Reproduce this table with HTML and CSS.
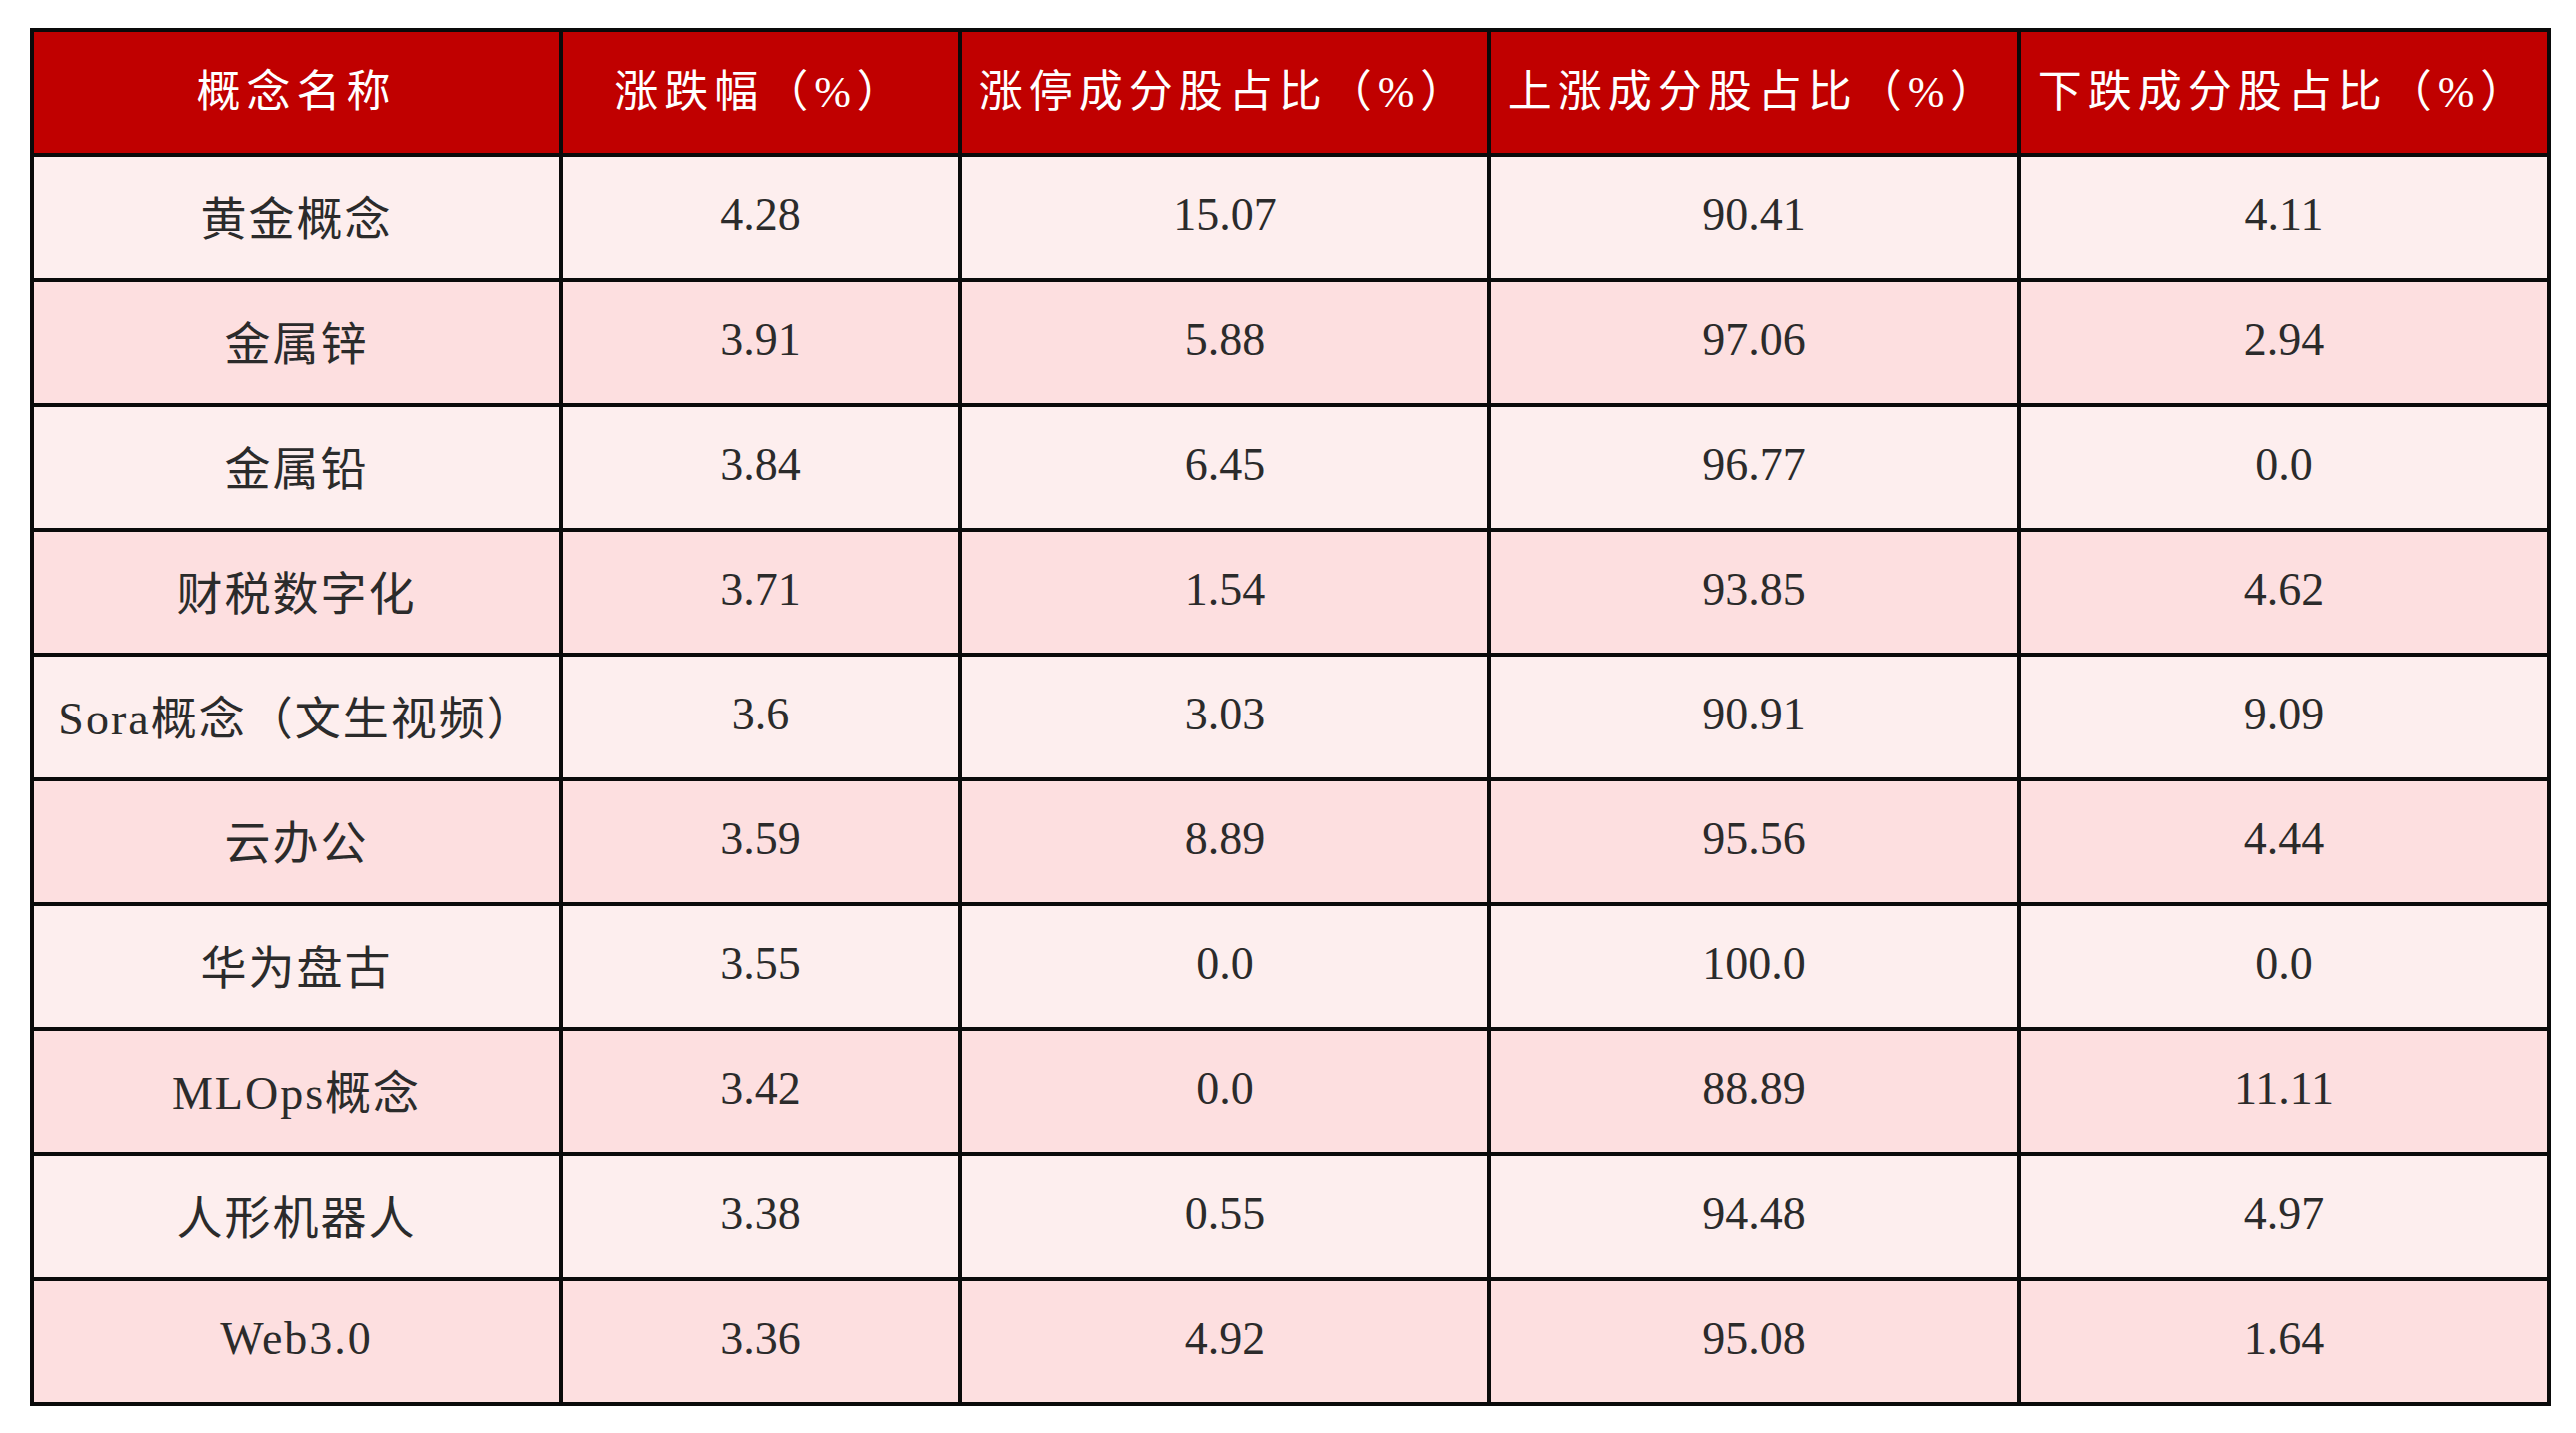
FILE: index.html
```html
<!DOCTYPE html>
<html lang="zh-CN">
<head>
<meta charset="utf-8">
<title>概念板块涨跌</title>
<link rel="stylesheet" href="styles.css">
</head>
<body>
<div class="wrap">
<table class="data">
<colgroup>
<col class="c1"><col class="c2"><col class="c3"><col class="c4"><col class="c5">
</colgroup>
<thead>
<tr><th>概念名称</th><th>涨跌幅（%）</th><th>涨停成分股占比（%）</th><th>上涨成分股占比（%）</th><th>下跌成分股占比（%）</th></tr>
</thead>
<tbody>
<tr><td class="name">黄金概念</td><td>4.28</td><td>15.07</td><td>90.41</td><td>4.11</td></tr>
<tr><td class="name">金属锌</td><td>3.91</td><td>5.88</td><td>97.06</td><td>2.94</td></tr>
<tr><td class="name">金属铅</td><td>3.84</td><td>6.45</td><td>96.77</td><td>0.0</td></tr>
<tr><td class="name">财税数字化</td><td>3.71</td><td>1.54</td><td>93.85</td><td>4.62</td></tr>
<tr><td class="name">Sora概念（文生视频）</td><td>3.6</td><td>3.03</td><td>90.91</td><td>9.09</td></tr>
<tr><td class="name">云办公</td><td>3.59</td><td>8.89</td><td>95.56</td><td>4.44</td></tr>
<tr><td class="name">华为盘古</td><td>3.55</td><td>0.0</td><td>100.0</td><td>0.0</td></tr>
<tr><td class="name">MLOps概念</td><td>3.42</td><td>0.0</td><td>88.89</td><td>11.11</td></tr>
<tr><td class="name">人形机器人</td><td>3.38</td><td>0.55</td><td>94.48</td><td>4.97</td></tr>
<tr><td class="name">Web3.0</td><td>3.36</td><td>4.92</td><td>95.08</td><td>1.64</td></tr>
</tbody>
</table>
</div>
</body>
</html>
```
FILE: styles.css
```css
html, body {
  margin: 0;
  padding: 0;
  background: #ffffff;
}
.wrap {
  padding: 28px 30px;
}
.data {
  border-collapse: collapse;
  table-layout: fixed;
  width: 2518px;
  font-family: "Liberation Serif", "Noto Sans CJK SC", serif;
}
.c1 { width: 529px; }
.c2 { width: 399px; }
.c3 { width: 530px; }
.c4 { width: 530px; }
.c5 { width: 530px; }
.data th, .data td {
  border: 4px solid #0a0a0a;
  height: 115px;
  padding: 0 0 6px 0;
  text-align: center;
  vertical-align: middle;
  white-space: nowrap;
}
.data th {
  background: #c00000;
  color: #ffffff;
  font-weight: 400;
  font-size: 44px;
  letter-spacing: 6px;
  height: 111px;
  padding-bottom: 10px;
}
.data td {
  font-size: 46px;
  color: #2b2b2b;
}
.data td.name {
  font-size: 46px;
  letter-spacing: 2px;
}
.data tbody tr:nth-child(odd) td {
  background: #fdeeee;
}
.data tbody tr:nth-child(even) td {
  background: #fddfe0;
}
```
